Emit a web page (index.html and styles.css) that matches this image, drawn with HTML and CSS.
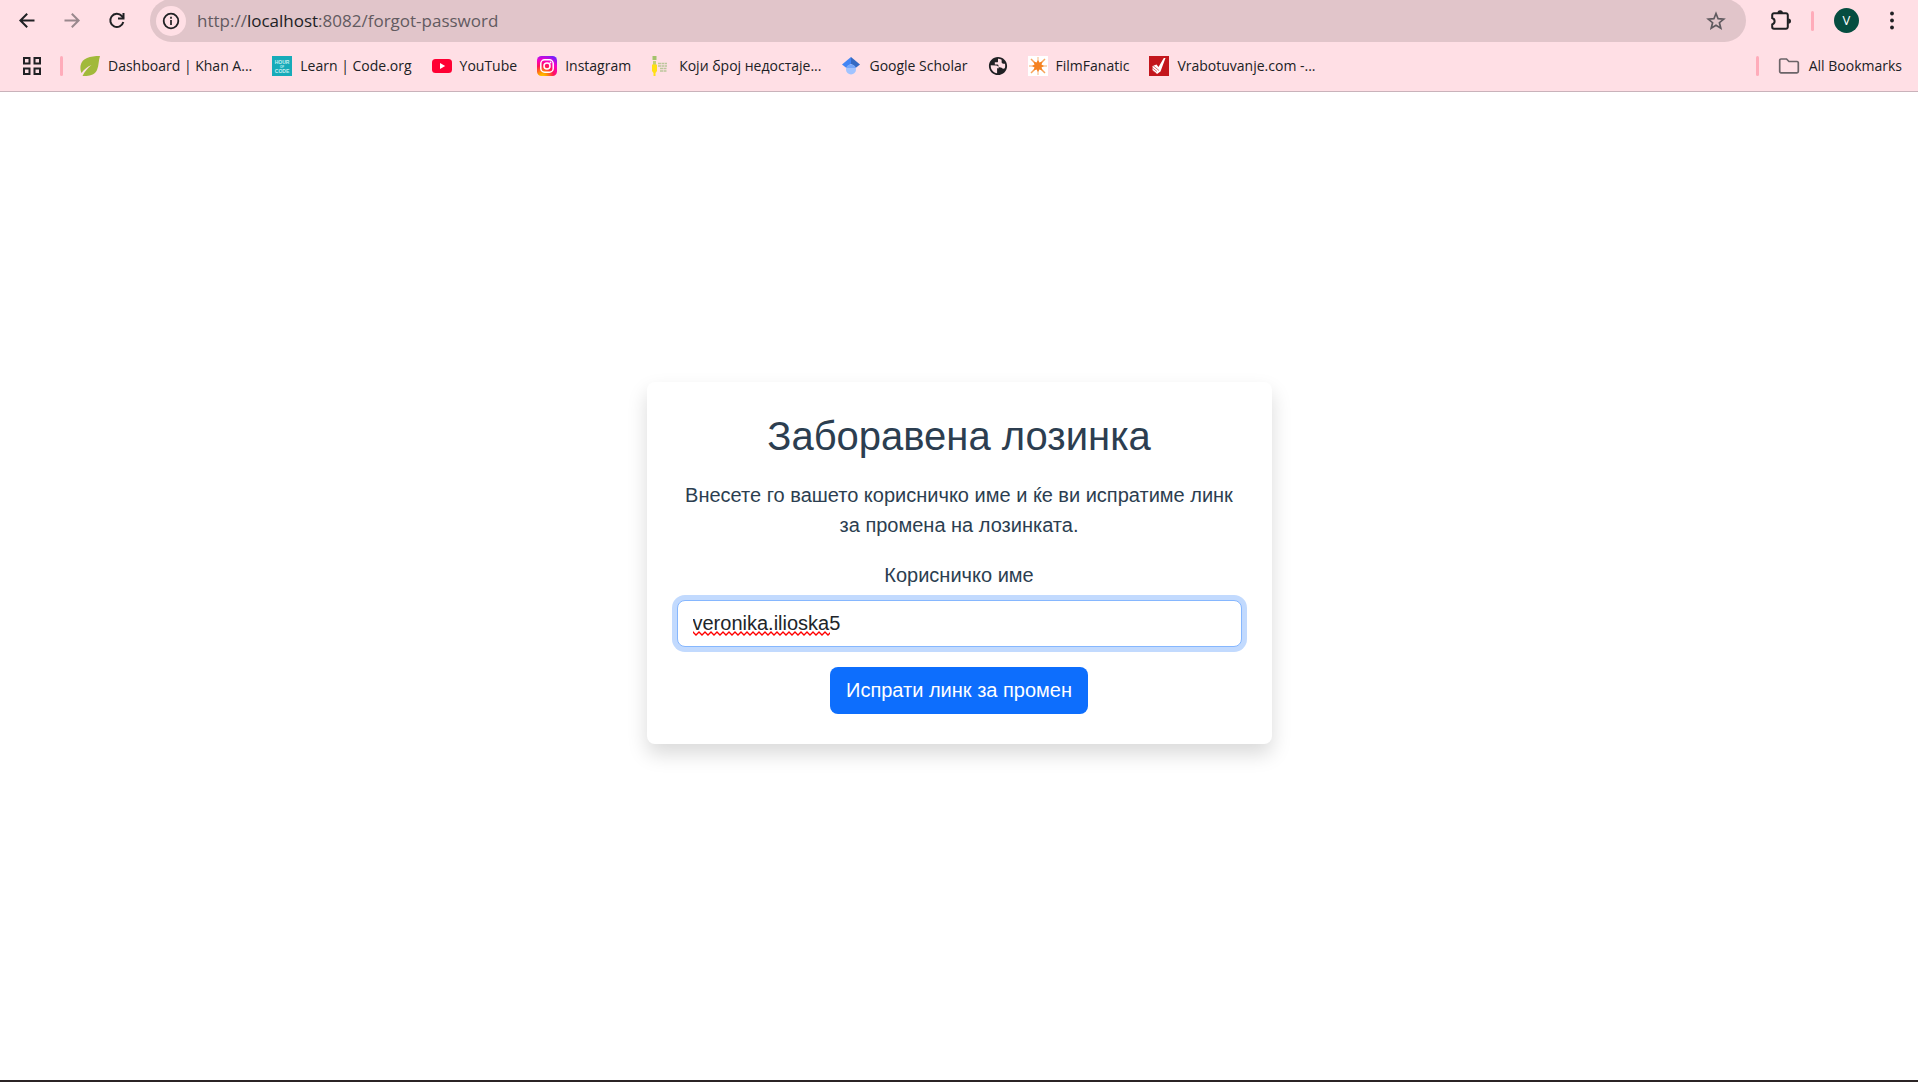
FILE: index.html
```html
<!DOCTYPE html>
<html lang="mk">
<head>
	<meta charset="UTF-8">
	<title>Заборавена лозинка</title>
	<link rel="stylesheet" href="styles.css">
</head>
<body>
	<header class="browser">
		<div class="toolbar">
			<button class="nav_btn" type="button" aria-label="Back">
				<svg width="20" height="20" viewBox="0 0 20 20"><path d="M17.500 9.500H4M10.200 2.700 3.400 9.500l6.800 6.800" fill="none" stroke="#202124" stroke-width="2"/></svg>
			</button>
			<button class="nav_btn nav_off" type="button" aria-label="Forward">
				<svg width="20" height="20" viewBox="0 0 20 20"><path d="M2.500 9.500H16M9.800 2.700l6.800 6.800-6.800 6.800" fill="none" stroke="#202124" stroke-width="2"/></svg>
			</button>
			<button class="nav_btn" type="button" aria-label="Reload">
				<svg width="20" height="20" viewBox="0 0 20 20"><path d="M16.300 11A6.600 6.600 0 1 1 14.800 5L16.500 7" fill="none" stroke="#202124" stroke-width="2"/><path d="M17.500 2V8.500H11v-2h4.500V2z" fill="#202124"/></svg>
			</button>
			<div class="address">
				<button class="site_info" type="button" aria-label="Site information">
					<svg width="18" height="18" viewBox="0 0 18 18"><circle cx="9" cy="9" r="7.300" fill="none" stroke="#202124" stroke-width="1.800"/><path d="M9 8v5M9 4.800v2" stroke="#202124" stroke-width="1.700"/></svg>
				</button>
				<p class="url">http://<span>localhost</span>:8082/forgot-password</p>
				<button class="star" type="button" aria-label="Bookmark this tab">
					<svg width="20" height="20" viewBox="0 0 20 20"><path d="M10 2.500l2.100 5.200 5.600.4-4.300 3.600 1.400 5.500-4.800-3-4.800 3 1.400-5.500-4.300-3.600 5.600-.4z" fill="none" stroke="#5f5a5f" stroke-width="1.700"/></svg>
				</button>
			</div>
			<div class="tools">
				<button class="nav_btn" type="button" aria-label="Extensions">
					<svg width="22" height="22" viewBox="0 0 22 22"><path d="M4 3.200h12a1.800 1.800 0 0 1 1.800 1.800v12a1.800 1.800 0 0 1-1.800 1.800H4A1.800 1.800 0 0 1 2.200 17v-2.600c3.200-1.200 3.200-5.200 0-6.400V5A1.800 1.800 0 0 1 4 3.200z" fill="none" stroke="#202124" stroke-width="2"/><path d="M7.500 3a2.700 2.700 0 0 1 5.400 0zM18.300 8.400a2.700 2.700 0 0 1 0 5.400z" fill="#202124"/></svg>
				</button>
				<i class="line"></i>
				<button class="avatar" type="button">V</button>
				<button class="nav_btn" type="button" aria-label="Menu">
					<svg width="20" height="20" viewBox="0 0 20 20" fill="#202124"><circle cx="10" cy="2.500" r="1.900"/><circle cx="10" cy="9.500" r="1.900"/><circle cx="10" cy="16.500" r="1.900"/></svg>
				</button>
			</div>
		</div>
		<nav class="bookmarks">
			<button class="apps" type="button" aria-label="Apps">
				<svg width="18" height="18" viewBox="0 0 18 18" fill="none" stroke="#202124" stroke-width="2"><path d="M1 1h5.500v5.500H1zM11.500 1H17v5.500h-5.500zM1 11.500h5.500V17H1zM11.500 11.500H17V17h-5.500z"/></svg>
			</button>
			<i class="line"></i>
			<ul class="marks">
				<li><a href="#">
					<svg width="20" height="20" viewBox="0 0 20 20"><path d="M20 0C10 0 2 2 .6 9.500c-.5 3 .1 5.500 1 7.500C4 13.500 7 11 11.500 9 8 12 4.500 15.500 2.500 20c6 .3 12-.5 14.500-6C19 9.500 18.500 4 20 0z" fill="#a1b93a"/></svg>
					<span>Dashboard | Khan A...</span>
				</a></li>
				<li><a href="#">
					<svg width="20" height="20" viewBox="0 0 20 20"><path d="M0 0h20v20H0z" fill="#17abb9"/><g fill="#c5edef" font-family="Liberation Sans" font-weight="bold" text-anchor="middle"><text x="10" y="8" font-size="5">HOUR</text><text x="10" y="12" font-size="3">OF</text><text x="10" y="17" font-size="5">CODE</text></g></svg>
					<span>Learn | Code.org</span>
				</a></li>
				<li><a href="#">
					<svg width="20" height="20" viewBox="0 0 20 20"><rect y="3" width="20" height="14" rx="3.500" fill="#ff0033"/><path d="M8 7v6l5.200-3z" fill="#fff"/></svg>
					<span>YouTube</span>
				</a></li>
				<li><a href="#">
					<svg width="20" height="20" viewBox="0 0 20 20"><defs><radialGradient id="insta" cx=".27" cy="1.050" r="1.150"><stop offset="0" stop-color="#ffd600"/><stop offset=".2" stop-color="#ff9a00"/><stop offset=".5" stop-color="#ff1458"/><stop offset=".75" stop-color="#f800c8"/><stop offset="1" stop-color="#7020ff"/></radialGradient></defs><rect width="20" height="20" rx="4.500" fill="url(#insta)"/><g fill="none" stroke="#fff" stroke-width="1.500"><rect x="3.800" y="3.800" width="12.400" height="12.400" rx="3.800"/><circle cx="10" cy="10" r="3"/></g><circle cx="13.500" cy="6.500" r=".9" fill="#fff"/></svg>
					<span>Instagram</span>
				</a></li>
				<li><a href="#">
					<svg width="20" height="20" viewBox="0 0 20 20"><path d="M1.500 0h4v4h-4z" fill="#a3c26b"/><path d="M2 5h3v4H2z" fill="#c2cf78"/><path d="M1 8.500h5V15l-1.500 2v3h-2v-3L1 15z" fill="#ffdf16"/><path d="M7 7.500h9M7 10h9M9 12.500h7M9 15h7" stroke="#bac69b" stroke-width="1.500" stroke-dasharray="3 .5"/></svg>
					<span>Који број недостаје...</span>
				</a></li>
				<li><a href="#">
					<svg width="20" height="20" viewBox="0 0 20 20"><path d="M10 1 1 8.500l4.500 3.500L10 8z" fill="#4285f4"/><path d="M10 1l9 7.500-4.500 3.500L10 8z" fill="#356ac3"/><circle cx="10" cy="13.500" r="5" fill="#a0c3ff"/><path d="M5.200 12a5 5 0 0 1 9.600 0z" fill="#76a7fa"/></svg>
					<span>Google Scholar</span>
				</a></li>
				<li><a href="#" aria-label="Website">
					<svg width="20" height="20" viewBox="1 1 22 22"><path d="M12 2C6.480 2 2 6.480 2 12s4.480 10 10 10 10-4.480 10-10S17.520 2 12 2zm-1 17.930c-3.950-.49-7-3.850-7-7.930 0-.3 0-.6.100-.9L10 11.500c1.500.3 3 1.300 3 3h-2zM12.500 13V11.500c0-.8-.7-1.200-1.500-1.200H8.500V8H11c.6 0 1-.45 1-1V4c1.100 0 2.600.3 4 1.200V8c0 1 .8 1.500 2 1.500h1.600c.4 1.500.5 3.500-.2 5-1 .8-2.500.5-3.400-.5z" fill="#202124" fill-rule="evenodd"/></svg>
				</a></li>
				<li><a href="#">
					<svg width="20" height="20" viewBox="0 0 20 20"><path d="M0 0h20v20H0z" fill="#fff"/><path d="M10 1v18M1 10h18" stroke="#fbc79a" stroke-width="1.300"/><path d="M3 3l14 14M17 3 3 17" stroke="#f7a45b" stroke-width="1.500"/><path d="M10 4l1.500 2.500L14.500 5.500 13.500 8.500 16 10l-2.500 1.500 1 3-3-1L10 16l-1.500-2.500-3 1 1-3L4 10l2.500-1.500-1-3 3 1z" fill="#f58220"/></svg>
					<span>FilmFanatic</span>
				</a></li>
				<li><a href="#">
					<svg width="20" height="20" viewBox="0 0 20 20"><path d="M0 0h20v20H0z" fill="#c3161c"/><path d="M16.500 2 14.800 2 9.500 11 7.500 8.500 3.500 10v4.500l4.500 3.500 3.500-2.500z" fill="#fff"/><path d="M3 11.500l5 4M4 9.500l6 5M3 14l4.500 3.500" stroke="#c3161c" stroke-width=".6"/></svg>
					<span>Vrabotuvanje.com -...</span>
				</a></li>
			</ul>
			<i class="line"></i>
			<a class="all_marks" href="#">
				<svg width="22" height="18" viewBox="0 0 22 18"><path d="M3 2h5.500l2.500 2.500h8A1.300 1.300 0 0 1 20.300 6v8.500A1.300 1.300 0 0 1 19 15.800H3a1.300 1.300 0 0 1-1.300-1.300V3.300A1.300 1.300 0 0 1 3 2z" fill="none" stroke="#6b6468" stroke-width="1.700"/></svg>
				<span>All Bookmarks</span>
			</a>
		</nav>
	</header>
	<main class="page">
		<form class="card">
			<h2>Заборавена лозинка</h2>
			<p>Внесете го вашето корисничко име и ќе ви испратиме линк за промена на лозинката.</p>
			<label for="username">Корисничко име</label>
			<div class="field">
				<input id="username" type="text" value="veronika.ilioska5" spellcheck="false">
				<svg class="squiggle" width="137" height="5"><defs><pattern id="wave" width="6" height="5" patternUnits="userSpaceOnUse"><path d="M-1 0 0 1l3 3 3-3 1-1" fill="none" stroke="#f00" stroke-width="1.300"/></pattern></defs><rect width="137" height="5" fill="url(#wave)"/></svg>
			</div>
			<button class="send" type="button">Испрати линк за промен</button>
		</form>
	</main>
	<footer class="taskbar"></footer>
</body>
</html>
```
FILE: styles.css
```css
/* 默认样式 */
*{ margin:0; padding:0; box-sizing:border-box; }
body{ min-height:100vh; display:flex; flex-direction:column; font-family:"Liberation Sans",Arial,sans-serif; font-size:20px; line-height:30px; color:#2c3e50; background:#fff; }
a{ text-decoration:none; color:inherit; }
li{ list-style:none; }
svg{ display:block; flex:none; }
button{ border:none; background:none; font-family:inherit; cursor:pointer; }
input{ outline:none; font-family:inherit; }

/* browser */
.browser{ background:#ffdfe5; border-bottom:1px solid #c9b2ba; font-family:"Open Sans","Noto Sans",sans-serif; color:#202124; overflow:hidden; }
.toolbar{ display:flex; align-items:center; height:41px; padding:0 4px; }
.nav_btn{ display:flex; align-items:center; justify-content:center; width:45px; height:40px; }
.nav_off{ opacity:.45; }
.address{ flex:1; display:flex; align-items:center; height:43px; margin:0 12px 0 11px; padding:0 20px 0 6px; border-radius:22px; background:#e1c5ca; }
.site_info{ display:flex; align-items:center; justify-content:center; width:30px; height:30px; border-radius:50%; background:#ffdfe5; }
.url{ flex:1; margin-left:11px; font-size:17px; line-height:24px; color:#625a60; }
.url span{ color:#202124; }
.tools{ display:flex; align-items:center; }
.line{ flex:none; width:3px; height:20px; border-radius:2px; background:#ffacba; }
.tools .line{ margin-left:8px; }
.avatar{ width:25px; height:25px; margin:0 10px 0 20px; border-radius:50%; background:#054d40; color:#fff; font-size:13px; line-height:25px; }

.bookmarks{ display:flex; align-items:center; height:50px; padding:0 16px 0 23px; font-size:14px; line-height:20px; white-space:nowrap; }
.apps{ margin-right:19px; }
.marks{ flex:1; display:flex; gap:20px; margin-left:17px; }
.marks a{ display:flex; align-items:center; gap:8px; }
.all_marks{ display:flex; align-items:center; gap:9px; margin-left:19px; }

/* page */
.page{ flex:1; display:flex; align-items:center; justify-content:center; padding-bottom:46px; }
.card{ width:625px; padding:30px; border-radius:8px; text-align:center; box-shadow:0 10px 20px rgba(0,0,0,.15); }
.card h2{ margin-bottom:20px; font-size:40px; font-weight:normal; line-height:48px; }
.card p{ margin-bottom:20px; }
.card label{ display:block; margin-bottom:10px; }
.field{ position:relative; margin-bottom:20px; }
.field input{ display:block; width:100%; height:47px; padding:0 15px; border:1px solid #86b7fe; border-radius:8px; box-shadow:0 0 0 5px #c2dafe; font-size:20px; color:#212529; background:#fff; }
.squiggle{ position:absolute; left:16px; top:31px; }
.send{ height:47px; padding:0 16px; border-radius:8px; background:#0d6efd; color:#fff; font-size:20px; vertical-align:top; }
.taskbar{ height:2px; background:#2b2425; }
```
